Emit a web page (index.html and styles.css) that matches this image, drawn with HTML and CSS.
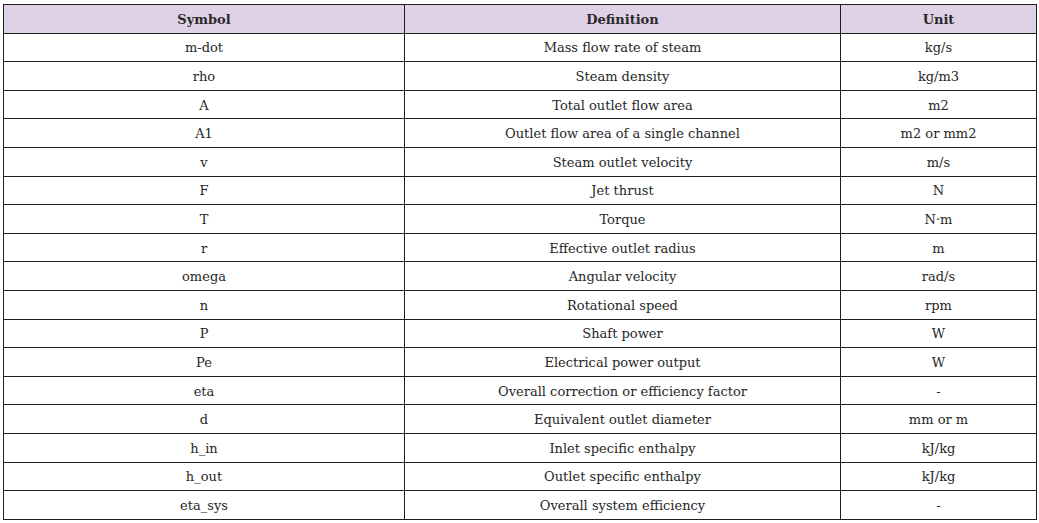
FILE: index.html
```html
<!DOCTYPE html>
<html>
<head>
<meta charset="utf-8">
<link rel="stylesheet" href="styles.css">
</head>
<body>
<table class="symtab">
<colgroup><col class="c-sym"><col class="c-def"><col class="c-unit"></colgroup>
<thead>
<tr><th>Symbol</th><th>Definition</th><th>Unit</th></tr>
</thead>
<tbody>
<tr><td>m-dot</td><td>Mass flow rate of steam</td><td>kg/s</td></tr>
<tr><td>rho</td><td>Steam density</td><td>kg/m3</td></tr>
<tr><td>A</td><td>Total outlet flow area</td><td>m2</td></tr>
<tr><td>A1</td><td>Outlet flow area of a single channel</td><td>m2 or mm2</td></tr>
<tr><td>v</td><td>Steam outlet velocity</td><td>m/s</td></tr>
<tr><td>F</td><td>Jet thrust</td><td>N</td></tr>
<tr><td>T</td><td>Torque</td><td>N·m</td></tr>
<tr><td>r</td><td>Effective outlet radius</td><td>m</td></tr>
<tr><td>omega</td><td>Angular velocity</td><td>rad/s</td></tr>
<tr><td>n</td><td>Rotational speed</td><td>rpm</td></tr>
<tr><td>P</td><td>Shaft power</td><td>W</td></tr>
<tr><td>Pe</td><td>Electrical power output</td><td>W</td></tr>
<tr><td>eta</td><td>Overall correction or efficiency factor</td><td>-</td></tr>
<tr><td>d</td><td>Equivalent outlet diameter</td><td>mm or m</td></tr>
<tr><td>h_in</td><td>Inlet specific enthalpy</td><td>kJ/kg</td></tr>
<tr><td>h_out</td><td>Outlet specific enthalpy</td><td>kJ/kg</td></tr>
<tr><td>eta_sys</td><td>Overall system efficiency</td><td>-</td></tr>
</tbody>
</table>
</body>
</html>
```
FILE: styles.css
```css
html, body {
  margin: 0;
  background: #ffffff;
}
body {
  padding: 4px 3px 0 3px;
  font-family: "DejaVu Serif", "Liberation Serif", serif;
  font-size: 13px;
  color: #262626;
}
.symtab {
  border-collapse: collapse;
  table-layout: fixed;
  width: 1033px;
}
.c-sym { width: 401px; }
.c-def { width: 436px; }
.c-unit { width: 196px; }
.symtab th,
.symtab td {
  border: 1px solid #1e1e1e;
  text-align: center;
  vertical-align: middle;
  padding: 2px 0 0 0;
  height: 25.6px;
  line-height: 18px;
}
.symtab th {
  background: #e0d2e6;
  font-weight: bold;
  color: #2a2a2a;
}
```
